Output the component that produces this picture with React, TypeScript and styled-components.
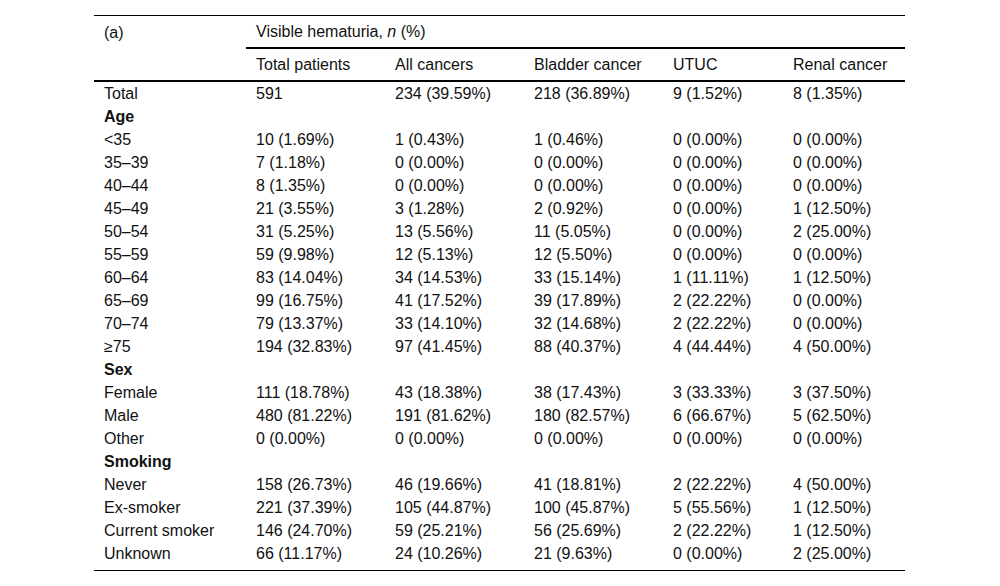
import React from "react";
import styled, { createGlobalStyle } from "styled-components";

const Global = createGlobalStyle`
  html, body { margin: 0; padding: 0; background: #fff; }
  body { font-family: "Liberation Sans", Arial, sans-serif; color: #111; }
`;

const Page = styled.div`
  width: 1000px;
  height: 586px;
  box-sizing: border-box;
  padding: 15px 0 0 94px;
  background: #fff;
`;

const Table = styled.table`
  width: 811px;
  table-layout: fixed;
  border-collapse: separate;
  border-spacing: 0;
  border-top: 1px solid #000;
  border-bottom: 1px solid #000;
  font-family: "Liberation Sans", Arial, sans-serif;
  font-size: 16px;
  line-height: 18px;
  color: #111;
`;

const HeadCell = styled.th<{ $rule?: boolean }>`
  box-sizing: border-box;
  height: ${(p) => (p.$rule ? 33 : 31)}px;
  padding: 0 0 0 10px;
  text-align: left;
  font-weight: normal;
  vertical-align: middle;
  white-space: nowrap;
  border-bottom: ${(p) => (p.$rule ? "2px solid #000" : "none")};
`;

const Cell = styled.td<{ $bold?: boolean; $last?: boolean }>`
  box-sizing: border-box;
  height: ${(p) => (p.$last ? 28 : 23)}px;
  padding: 0 0 ${(p) => (p.$last ? 5 : 0)}px 10px;
  text-align: left;
  vertical-align: middle;
  white-space: nowrap;
  font-weight: ${(p) => (p.$bold ? "bold" : "normal")};
`;

type Row = { label: string; bold?: boolean; values?: string[] };

const rows: Row[] = [
  { label: "Total", values: ["591", "234 (39.59%)", "218 (36.89%)", "9 (1.52%)", "8 (1.35%)"] },
  { label: "Age", bold: true },
  { label: "<35", values: ["10 (1.69%)", "1 (0.43%)", "1 (0.46%)", "0 (0.00%)", "0 (0.00%)"] },
  { label: "35–39", values: ["7 (1.18%)", "0 (0.00%)", "0 (0.00%)", "0 (0.00%)", "0 (0.00%)"] },
  { label: "40–44", values: ["8 (1.35%)", "0 (0.00%)", "0 (0.00%)", "0 (0.00%)", "0 (0.00%)"] },
  { label: "45–49", values: ["21 (3.55%)", "3 (1.28%)", "2 (0.92%)", "0 (0.00%)", "1 (12.50%)"] },
  { label: "50–54", values: ["31 (5.25%)", "13 (5.56%)", "11 (5.05%)", "0 (0.00%)", "2 (25.00%)"] },
  { label: "55–59", values: ["59 (9.98%)", "12 (5.13%)", "12 (5.50%)", "0 (0.00%)", "0 (0.00%)"] },
  { label: "60–64", values: ["83 (14.04%)", "34 (14.53%)", "33 (15.14%)", "1 (11.11%)", "1 (12.50%)"] },
  { label: "65–69", values: ["99 (16.75%)", "41 (17.52%)", "39 (17.89%)", "2 (22.22%)", "0 (0.00%)"] },
  { label: "70–74", values: ["79 (13.37%)", "33 (14.10%)", "32 (14.68%)", "2 (22.22%)", "0 (0.00%)"] },
  { label: "≥75", values: ["194 (32.83%)", "97 (41.45%)", "88 (40.37%)", "4 (44.44%)", "4 (50.00%)"] },
  { label: "Sex", bold: true },
  { label: "Female", values: ["111 (18.78%)", "43 (18.38%)", "38 (17.43%)", "3 (33.33%)", "3 (37.50%)"] },
  { label: "Male", values: ["480 (81.22%)", "191 (81.62%)", "180 (82.57%)", "6 (66.67%)", "5 (62.50%)"] },
  { label: "Other", values: ["0 (0.00%)", "0 (0.00%)", "0 (0.00%)", "0 (0.00%)", "0 (0.00%)"] },
  { label: "Smoking", bold: true },
  { label: "Never", values: ["158 (26.73%)", "46 (19.66%)", "41 (18.81%)", "2 (22.22%)", "4 (50.00%)"] },
  { label: "Ex-smoker", values: ["221 (37.39%)", "105 (44.87%)", "100 (45.87%)", "5 (55.56%)", "1 (12.50%)"] },
  { label: "Current smoker", values: ["146 (24.70%)", "59 (25.21%)", "56 (25.69%)", "2 (22.22%)", "1 (12.50%)"] },
  { label: "Unknown", values: ["66 (11.17%)", "24 (10.26%)", "21 (9.63%)", "0 (0.00%)", "2 (25.00%)"] },
];

const colWidths = [152, 139, 139, 139, 120, 122];
const headers = ["Total patients", "All cancers", "Bladder cancer", "UTUC", "Renal cancer"];

export default function App() {
  return (
    <>
      <Global />
      <Page>
        <Table>
          <colgroup>
            {colWidths.map((w, i) => (
              <col key={i} style={{ width: w }} />
            ))}
          </colgroup>
          <thead>
            <tr>
              <HeadCell>(a)</HeadCell>
              <HeadCell colSpan={5} $rule>
                Visible hematuria, <i>n</i> (%)
              </HeadCell>
            </tr>
            <tr>
              <HeadCell $rule />
              {headers.map((h) => (
                <HeadCell key={h} $rule>
                  {h}
                </HeadCell>
              ))}
            </tr>
          </thead>
          <tbody>
            {rows.map((r, i) => {
              const last = i === rows.length - 1;
              return (
                <tr key={r.label}>
                  <Cell $bold={r.bold} $last={last}>
                    {r.label}
                  </Cell>
                  {(r.values ?? ["", "", "", "", ""]).map((v, j) => (
                    <Cell key={j} $last={last}>
                      {v}
                    </Cell>
                  ))}
                </tr>
              );
            })}
          </tbody>
        </Table>
      </Page>
    </>
  );
}
